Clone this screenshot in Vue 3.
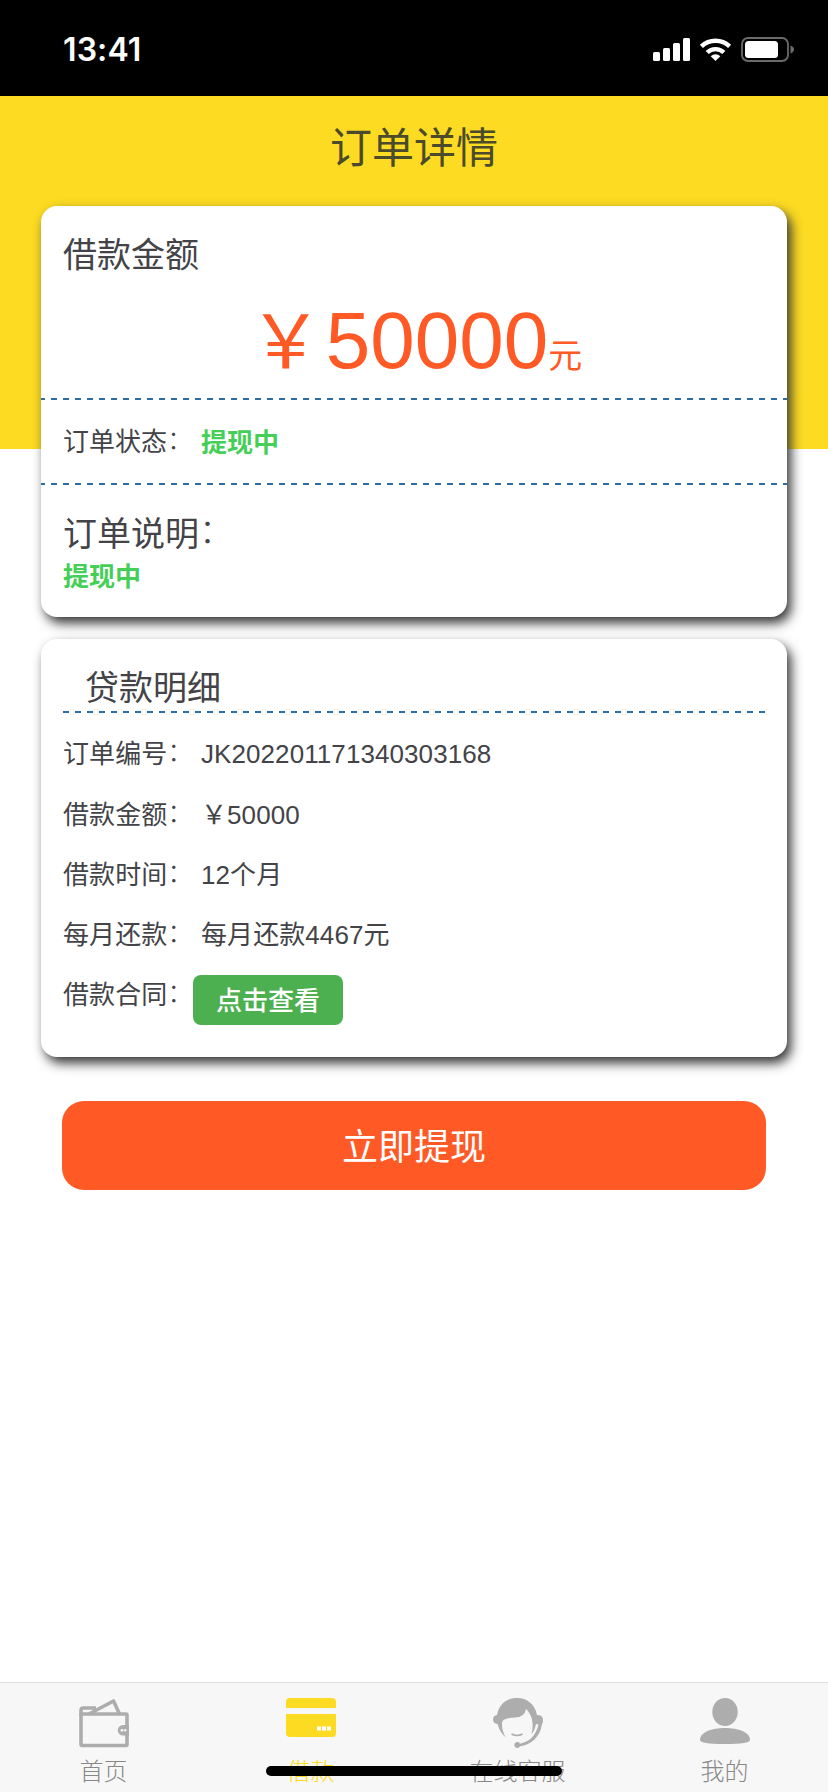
<script setup>
import { ref } from 'vue'

const order = ref({
  amount: '50000',
  status: '提现中',
  remark: '提现中'
})

const details = ref([
  { label: '订单编号', value: 'JK202201171340303168' },
  { label: '借款金额', value: '￥50000' },
  { label: '借款时间', value: '12个月' },
  { label: '每月还款', value: '每月还款4467元' }
])

const tabs = [
  { name: 'home', label: '首页' },
  { name: 'loan', label: '借款' },
  { name: 'service', label: '在线客服' },
  { name: 'mine', label: '我的' }
]

const activeTab = ref('loan')
</script>

<template>
  <div class="page">
    <div class="status-bar">
      <span class="time">13:41</span>
      <svg class="status-icons" width="142" height="26" viewBox="0 0 142 26">
        <g fill="#fff">
          <rect x="0" y="15" width="7" height="9" rx="1.5" />
          <rect x="10" y="11" width="7" height="13" rx="1.5" />
          <rect x="20" y="6" width="7" height="18" rx="1.5" />
          <rect x="30" y="1" width="7" height="23" rx="1.5" />
          <path d="M62.500 24 L57.700 19.200 A7 7 0 0 1 67.300 19.200 Z" />
        </g>
        <g fill="none" stroke="#fff" stroke-width="4.400">
          <path d="M54.200 15.500 A12 12 0 0 1 70.800 15.500" />
          <path d="M48.400 9.300 A20.500 20.500 0 0 1 76.600 9.300" />
        </g>
        <rect x="89" y="1" width="46" height="23" rx="6" fill="none" stroke="#6b6b6b" stroke-width="1.800" />
        <rect x="92" y="4" width="33" height="17" rx="3.500" fill="#fff" />
        <path d="M137.500 8.500 Q141 10 141 12.500 Q141 15 137.500 16.500 Z" fill="#6b6b6b" />
      </svg>
    </div>

    <header class="header">
      <h1 class="title">订单详情</h1>
    </header>

    <main class="content">
      <section class="card">
        <h2 class="card-title">借款金额</h2>
        <p class="amount"><span class="yen">￥</span>{{ order.amount }}<span class="unit">元</span></p>
        <div class="status-row">
          <span class="label">订单状态<i class="colon">：</i></span>
          <span class="green">{{ order.status }}</span>
        </div>
        <div class="remark">
          <h2 class="remark-title">订单说明<i class="colon">：</i></h2>
          <p class="green">{{ order.remark }}</p>
        </div>
      </section>

      <section class="card detail-card">
        <h2 class="detail-title">贷款明细</h2>
        <div v-for="item in details" :key="item.label" class="row">
          <span class="label">{{ item.label }}<i class="colon">：</i></span>
          <span>{{ item.value }}</span>
        </div>
        <div class="row contract">
          <span class="label">借款合同<i class="colon">：</i></span>
          <button class="view-btn">点击查看</button>
        </div>
      </section>

      <button class="submit-btn">立即提现</button>
    </main>

    <nav class="tabbar">
      <a
        v-for="tab in tabs"
        :key="tab.name"
        class="tab"
        :class="{ active: activeTab === tab.name }"
        @click="activeTab = tab.name"
      >
        <svg v-if="tab.name === 'home'" class="tab-icon" viewBox="0 0 50 50">
          <g fill="none" stroke="currentColor" stroke-width="3.600" stroke-linejoin="round">
            <rect x="2" y="16" width="46" height="31.500" rx="1" />
            <path d="M2 18 V12.500 Q2 10 4.500 10 H17 M10 16 L34.500 3 L40.500 16" />
          </g>
          <path d="M50 27 H44 A5.200 5.200 0 0 0 44 37.500 H50 Z" fill="currentColor" />
          <circle cx="43" cy="32.300" r="1.400" fill="#f7f7f7" />
          <circle cx="46.200" cy="32.300" r="1.200" fill="#f7f7f7" />
        </svg>
        <svg v-else-if="tab.name === 'loan'" class="tab-icon" viewBox="0 0 50 50">
          <path d="M0 10 V4 Q0 0 4 0 H46 Q50 0 50 4 V10 Z" fill="currentColor" />
          <path d="M0 16 H50 V35 Q50 39 46 39 H4 Q0 39 0 35 Z" fill="currentColor" />
          <path d="M31 28.500 h4 v4 h-4 z M36 28.500 h4 v4 h-4 z M41 28.500 h4 v4 h-4 z" fill="#fff" />
        </svg>
        <svg v-else-if="tab.name === 'service'" class="tab-icon" viewBox="0 0 50 50">
          <path
            d="M4 17 C6 6 14 0 24 0 C34 0 42 6 44 17 Q50 17 50 22 Q50 25.500 49 26 C47 40 37 47 27 48.300 A3 3 0 1 1 27 45.700 C36 44 43 38 45.500 26.500 L43 26 Q41.500 33 38.500 36 C40.500 28 40.500 18 33 11 Q31.500 19.500 22 19.500 C13 20 9 21 9 26 Q9 34 13 39.500 Q7 35 4.500 26 Q0 25.500 0 21.500 Q0 17.500 4 17 Z"
            fill="currentColor"
          />
          <path d="M18.500 36 Q24 39 29.500 36" fill="none" stroke="currentColor" stroke-width="1.600" />
        </svg>
        <svg v-else class="tab-icon" viewBox="0 0 50 50">
          <ellipse cx="25" cy="14" rx="12.700" ry="14" fill="currentColor" />
          <path d="M0 42 C0 34 12 30 25 30 C38 30 50 34 50 42 Q50 46 25 46 Q0 46 0 42 Z" fill="currentColor" />
        </svg>
        <span class="tab-label">{{ tab.label }}</span>
      </a>
      <div class="home-indicator"></div>
    </nav>
  </div>
</template>

<style>
body {
  margin: 0;
  background: #fff;
}
</style>

<style scoped>
.page {
  display: flex;
  flex-direction: column;
  width: 828px;
  height: 1792px;
  overflow: hidden;
  color: #434348;
  font-family: 'Liberation Sans', 'Noto Sans CJK SC', sans-serif;
  font-size: 26px;
  font-weight: 400;
  background: #fff;
}

h1,
h2,
p {
  margin: 0;
  font-weight: 400;
}

button {
  padding: 0;
  border: none;
  color: #fff;
  font-family: inherit;
  cursor: pointer;
}

.status-bar {
  display: flex;
  flex-shrink: 0;
  justify-content: space-between;
  align-items: center;
  box-sizing: border-box;
  height: 96px;
  padding: 3px 33px 0 63px;
  background: #000;
}

.time {
  color: #fff;
  font-family: Inter, sans-serif;
  font-size: 32px;
  font-weight: 600;
  letter-spacing: 0.1px;
}

.header {
  flex-shrink: 0;
  height: 353px;
  background: #fcdb22;
}

.title {
  color: #4b4a2b;
  font-size: 42px;
  line-height: 106px;
  text-align: center;
}

.content {
  flex: 1;
  margin-top: -243px;
  padding: 0 41px;
}

.card {
  box-sizing: border-box;
  height: 411px;
  margin-bottom: 22px;
  border-radius: 16px;
  background: #fff;
  box-shadow: 4px 6px 12px #333;
}

.card-title {
  padding: 24px 22px 0;
  font-size: 34px;
  line-height: 50px;
}

.amount {
  height: 118px;
  color: #ff5926;
  font-size: 80px;
  line-height: 122px;
  text-align: center;
}

.yen {
  padding: 0 3px;
  font-size: 74px;
}

.unit {
  font-size: 34px;
}

.status-row,
.remark,
.row:nth-child(2) {
  background: repeating-linear-gradient(90deg, #2e6da4 0 6px, transparent 6px 12px) 0 0 / 100% 2px no-repeat;
}

.status-row,
.remark {
  padding: 0 22px;
  background-position: -2px 0;
  background-size: 750px 2px;
}

.status-row {
  display: flex;
  height: 85px;
  line-height: 88px;
}

.label {
  width: 138px;
  white-space: nowrap;
}

.colon {
  position: relative;
  top: -0.080em;
  font-style: normal;
  font-weight: 300;
}

.green {
  color: #45cf58;
  font-family: 'Noto Sans CJK SC', sans-serif;
  font-weight: 600;
  line-height: 85px;
}

.remark-title {
  padding-top: 26px;
  font-size: 34px;
  line-height: 50px;
}

.remark .green {
  line-height: 32px;
}

.detail-card {
  height: 418px;
  padding: 24px 22px 0;
}

.detail-title {
  height: 48px;
  padding-left: 22px;
  font-size: 34px;
  line-height: 50px;
}

.row {
  display: flex;
  height: 60px;
  line-height: 60px;
  letter-spacing: 0.080px;
}

.row:nth-child(2) {
  height: 74px;
  line-height: 86px;
}

.contract .label {
  width: 130px;
}

.view-btn {
  width: 150px;
  height: 50px;
  margin-top: 10px;
  padding-bottom: 3px;
  border-radius: 8px;
  background: #4caf50;
  font-family: 'Noto Sans CJK SC', sans-serif;
  font-size: 26px;
  font-weight: 500;
  line-height: 46px;
}

.submit-btn {
  display: block;
  width: 704px;
  height: 89px;
  margin: 44px auto 0;
  padding-bottom: 3px;
  border-radius: 22px;
  background: #ff5926;
  font-size: 36px;
}

.tabbar {
  position: relative;
  display: flex;
  flex-shrink: 0;
  box-sizing: border-box;
  height: 110px;
  border-top: 1px solid #dedede;
  background: #f7f7f7;
}

.tab {
  display: flex;
  flex: 1;
  flex-direction: column;
  align-items: center;
  padding-top: 15px;
  color: #adadad;
}

.tab-icon {
  flex-shrink: 0;
  width: 50px;
  height: 50px;
}

.tab-label {
  color: #888;
  font-size: 24px;
  font-weight: 300;
  line-height: 48px;
}

.tab.active,
.tab.active .tab-label {
  color: #fcdb22;
}

.home-indicator {
  position: absolute;
  left: 266px;
  bottom: 16px;
  width: 296px;
  height: 10px;
  border-radius: 5px;
  background: #000;
}
</style>
